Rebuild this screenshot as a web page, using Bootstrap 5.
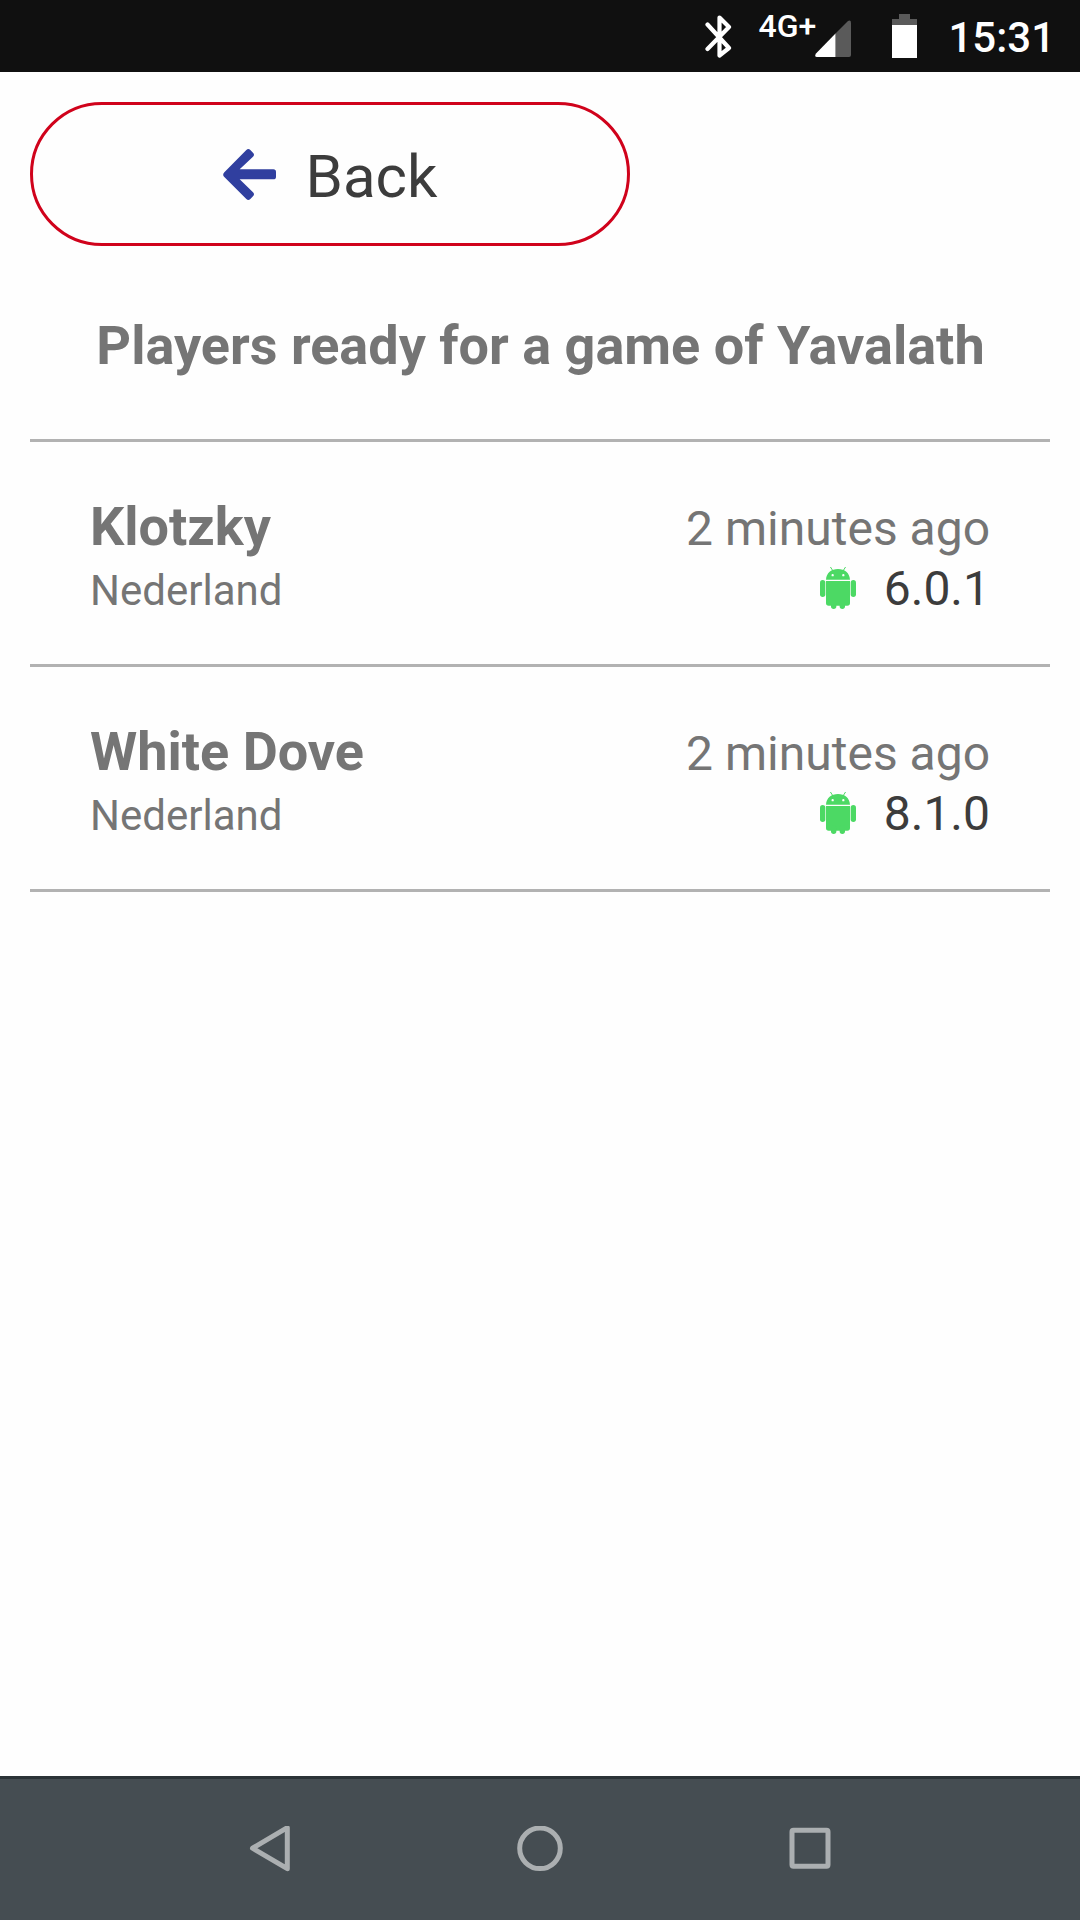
<!DOCTYPE html>
<html lang="en">
<head>
<meta charset="utf-8">
<meta name="viewport" content="width=device-width, initial-scale=1">
<title>Players ready</title>
<link href="https://cdn.jsdelivr.net/npm/bootstrap@5.3.0/dist/css/bootstrap.min.css" rel="stylesheet">
<style>
body { font-family: Roboto, sans-serif; color: #757575; background: #fefefe; }
svg { display: block; flex: none; }
.status-bar { height: 72px; background: #101010; color: #fff; padding-right: 25px; }
.bluetooth { margin-top: 15px; }
.net-type { font-size: 32px; line-height: 38px; font-weight: 500; margin: 7px 0 0 25px; width: 57px; white-space: nowrap; }
.signal { margin-top: 20px; }
.battery { margin: 14px 0 0 41px; }
.clock { font-size: 42px; line-height: 50px; font-weight: 500; margin: 13px 0 0 31px; }
.content-area { padding: 30px; }
.back-btn { width: 600px; height: 144px; border: 3px solid #d0021b; color: #3c3c3c; gap: 30px; background: #fefefe; }
.back-label { font-size: 60px; line-height: 72px; padding-top: 5px; }
.page-title { font-size: 54px; line-height: 64px; font-weight: 700; margin: 68px 0 61px; padding-left: 1px; }
.player-list { border-top: 3px solid #b2b2b2; }
.player-row { height: 225px; border-bottom: 3px solid #b2b2b2; padding: 49px 60px 0; }
.player-name { font-size: 54px; line-height: 71px; font-weight: 700; }
.player-country { font-size: 42px; line-height: 58px; }
.player-meta { font-size: 48px; line-height: 60px; padding-top: 8px; }
.os-version { color: #3c3c3c; gap: 28px; }
.os-version svg { margin-bottom: 3px; }
.nav-keys { height: 144px; background: #454d52; border-top: 3px solid #2b3337; padding: 0 135px; }
</style>
<script src="https://cdn.jsdelivr.net/npm/bootstrap@5.3.0/dist/js/bootstrap.bundle.min.js"></script>
</head>
<body class="d-flex flex-column vh-100 overflow-hidden">
<svg width="0" height="0" class="position-absolute" aria-hidden="true">
  <symbol id="robot" viewBox="0 0 108 126">
    <g fill="#4cd964">
      <path d="M32 1l7 11M76 1l-7 11" stroke="#4cd964" stroke-width="3" stroke-linecap="round"/>
      <path fill-rule="evenodd" d="M18 38C19 18 34 6 54 6s35 12 36 32zM38 21a3.5 3.5 0 1 0 0 7a3.500 3.500 0 0 0 0-7zM70 21a3.500 3.500 0 1 0 0 7a3.500 3.500 0 0 0 0-7z"/>
      <path d="M18 42h72v66q0 8-8 8H26q-8 0-8-8z"/>
      <rect x="0" y="39" width="16" height="51" rx="8"/>
      <rect x="92" y="39" width="16" height="51" rx="8"/>
      <rect x="33" y="100" width="16" height="26" rx="8"/>
      <rect x="59" y="100" width="16" height="26" rx="8"/>
    </g>
  </symbol>
</svg>

<header class="status-bar d-flex justify-content-end align-items-start flex-shrink-0">
  <svg class="bluetooth" width="28" height="44" viewBox="0 0 28 44"><path d="M2.500 9.500L24 33L14.500 40.500V2.500L24 12L2.500 34" fill="none" stroke="#fff" stroke-width="4.200" stroke-linejoin="round" stroke-linecap="round"/></svg>
  <span class="net-type">4G+</span>
  <svg class="signal" width="36" height="37" viewBox="0 0 36 37"><path d="M33 1Q36-.5 36 3V35Q36 37 34 37H20.500V13.500z" fill="#5a5a5a"/><path d="M20.500 13.500V37H2Q-1 37 1 33.500z" fill="#fff"/></svg>
  <svg class="battery" width="25" height="44" viewBox="0 0 25 44"><path d="M7 0h11v5h7v6H0V5h7z" fill="#5a5a5a"/><path d="M0 11h25v33H0z" fill="#fff"/></svg>
  <span class="clock">15:31</span>
</header>

<main class="content-area flex-grow-1">
  <button type="button" class="back-btn rounded-pill d-flex align-items-center justify-content-center p-0">
    <svg width="53" height="51" viewBox="0 0 159 153"><path fill="#303f9f" d="M4 70L70 3Q76-3 82 3L90 11Q96 17 90 23L50 61H151Q159 61 159 69V83Q159 91 151 91H50L90 130Q96 136 90 142L82 150Q76 156 70 150L4 84Q-3 77 4 70z"/></svg>
    <span class="back-label">Back</span>
  </button>
  <h1 class="page-title text-center">Players ready for a game of Yavalath</h1>
  <section class="player-list">
    <article class="player-row d-flex justify-content-between">
      <div><div class="player-name">Klotzky</div><div class="player-country">Nederland</div></div>
      <div class="player-meta text-end"><div>2 minutes ago</div><div class="os-version d-flex justify-content-end align-items-center"><svg width="36" height="42"><use href="#robot"/></svg><span>6.0.1</span></div></div>
    </article>
    <article class="player-row d-flex justify-content-between">
      <div><div class="player-name">White Dove</div><div class="player-country">Nederland</div></div>
      <div class="player-meta text-end"><div>2 minutes ago</div><div class="os-version d-flex justify-content-end align-items-center"><svg width="36" height="42"><use href="#robot"/></svg><span>8.1.0</span></div></div>
    </article>
  </section>
</main>

<nav class="nav-keys d-flex flex-shrink-0">
  <div class="flex-fill d-flex justify-content-center align-items-center"><svg width="48" height="48" viewBox="0 0 48 48"><path d="M41.300 1.700v41L6.500 22.200z" fill="none" stroke="#abafb1" stroke-width="5" stroke-linejoin="round"/></svg></div>
  <div class="flex-fill d-flex justify-content-center align-items-center"><svg width="48" height="48" viewBox="0 0 48 48"><circle cx="24" cy="22.300" r="20.300" fill="none" stroke="#abafb1" stroke-width="5" /></svg></div>
  <div class="flex-fill d-flex justify-content-center align-items-center"><svg width="48" height="48" viewBox="0 0 48 48"><rect x="6" y="4.300" width="36" height="36" rx="1.500" fill="none" stroke="#abafb1" stroke-width="5"/></svg></div>
</nav>
</body>
</html>
